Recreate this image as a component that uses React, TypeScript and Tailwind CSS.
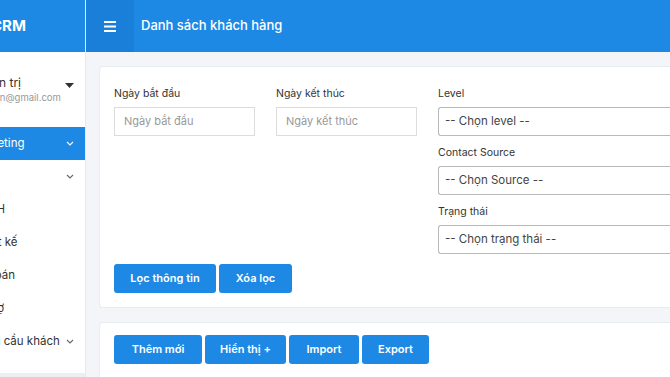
import React from 'react';

const font = { fontFamily: 'Inter, "Noto Sans", sans-serif' };

const menu = [
  { text: 'Marketing', shift: 'ml-[-30px]', chevron: true, active: true },
  { text: 'Bán', shift: 'ml-[-40px]', chevron: true },
  { text: 'CSKH', shift: 'ml-[-27px]' },
  { text: 'Thiết kế', shift: 'ml-[-26px]' },
  { text: 'Kế toán', shift: 'ml-[-26px]' },
  { text: 'Công nợ', shift: 'ml-[-42px]' },
  { text: 'Yêu cầu khách', shift: 'ml-[-20px]', chevron: true },
];

const Chevron = () => (
  <svg width="8" height="5" viewBox="0 0 8 5" className="shrink-0">
    <path d="M1 1l3 3 3-3" fill="none" stroke="currentColor" strokeWidth="1.1" />
  </svg>
);

const Field = ({ label, placeholder }: { label: string; placeholder: string }) => (
  <div className="w-[141px]">
    <div className="text-[10.5px] text-[#333] h-[14px] leading-[14px] mt-[20px] mb-[6px]">{label}</div>
    <div className="h-[29px] border border-[#dcdcdc] flex items-center px-[9px] text-[11px] text-[#999]">{placeholder}</div>
  </div>
);

const Select = ({ label, value }: { label: string; value: string }) => (
  <div>
    <div className="text-[10.5px] text-[#333] h-[14px] leading-[14px] mb-[6px]">{label}</div>
    <div className="h-[29px] border border-[#b9b9b9] border-r-0 rounded-l-[3px] flex items-center px-[6px] text-[11.5px] text-[#444]">{value}</div>
  </div>
);

const Btn = ({ children, w }: { children: React.ReactNode; w: string }) => (
  <button className={`${w} h-[29px] bg-[#1e88e5] rounded-[3px] text-white text-[11px] font-semibold`}>{children}</button>
);

export default function App() {
  return (
    <div className="w-[670px] h-[377px] overflow-hidden flex bg-[#f3f5f8]" style={font}>
      {/* Sidebar */}
      <div className="w-[86px] shrink-0 flex flex-col bg-white border-r border-[#e6e9ee] overflow-hidden">
        <div className="h-[52px] bg-[#1e88e5] flex items-center text-white font-bold text-[15px] shrink-0">
          <span className="ml-[-9px]">CRM</span>
        </div>
        <div className="h-[75px] flex items-start pt-[23px] pr-[11px] shrink-0">
          <div className="flex-1 whitespace-nowrap">
            <div className="text-[12px] text-[#333] leading-[16px] ml-[-24px]">Quản trị</div>
            <div className="text-[9.5px] text-[#999] leading-[13px] ml-[-22px]">admin@gmail.com</div>
          </div>
          <svg width="9" height="5" viewBox="0 0 9 5" className="mt-[8px] shrink-0"><path d="M0 0h9L4.5 5z" fill="#333" /></svg>
        </div>
        {menu.map((m) => (
          <div
            key={m.text}
            className={`h-[33px] flex items-center pr-[11px] whitespace-nowrap text-[11.5px] shrink-0 ${m.active ? 'bg-[#1e88e5] text-white' : 'text-[#333]'}`}
          >
            <span className={`flex-1 ${m.shift}`}>{m.text}</span>
            {m.chevron && <span className={m.active ? 'text-white' : 'text-[#666]'}><Chevron /></span>}
          </div>
        ))}
        <div className="flex-1" />
        <div className="h-[4px] bg-[#eceef1] shrink-0" />
      </div>

      {/* Main */}
      <div className="flex-1 flex flex-col min-w-0 overflow-hidden">
        <div className="h-[52px] bg-[#1e88e5] flex items-center shrink-0">
          <div className="w-[48px] h-full bg-[#1a7fd8] flex items-center justify-center">
            <svg width="12" height="11" viewBox="0 0 12 11"><path d="M0 1h12M0 5.5h12M0 10h12" stroke="white" strokeWidth="2" /></svg>
          </div>
          <div className="ml-[7px] text-white text-[13px] font-medium">Danh sách khách hàng</div>
        </div>

        <div className="pl-[13px] pt-[14px] flex flex-col gap-[14px] w-[620px] shrink-0">
          <div className="bg-white rounded-l-[4px] border border-[#e8ebef] border-r-0 h-[242px] pl-[14px] flex flex-col">
            <div className="flex gap-[21px]">
              <Field label="Ngày bắt đầu" placeholder="Ngày bắt đầu" />
              <Field label="Ngày kết thúc" placeholder="Ngày kết thúc" />
              <div className="flex-1 flex flex-col gap-[10px] pt-[20px]">
                <Select label="Level" value="-- Chọn level --" />
                <Select label="Contact Source" value="-- Chọn Source --" />
                <Select label="Trạng thái" value="-- Chọn trạng thái --" />
              </div>
            </div>
            <div className="flex gap-[3px] mt-[10px]">
              <Btn w="w-[102px]">Lọc thông tin</Btn>
              <Btn w="w-[73px]">Xóa lọc</Btn>
            </div>
          </div>

          <div className="bg-white rounded-l-[4px] border border-[#e8ebef] border-r-0 h-[80px] pl-[14px] pt-[12px]">
            <div className="flex gap-[3px]">
              <Btn w="w-[88px]">Thêm mới</Btn>
              <Btn w="w-[81px]">Hiển thị +</Btn>
              <Btn w="w-[70px]">Import</Btn>
              <Btn w="w-[67px]">Export</Btn>
            </div>
          </div>
        </div>
      </div>
    </div>
  );
}
